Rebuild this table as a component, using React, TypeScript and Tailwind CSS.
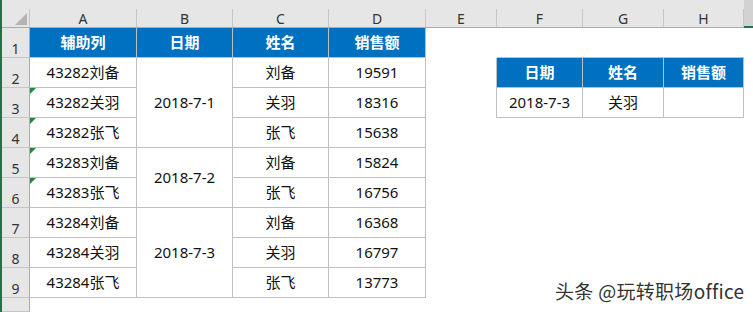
import React from 'react';
import clsx from 'clsx';

type CellDef = {
  t?: string;
  blue?: boolean;
  r?: boolean;
  b?: boolean;
  tri?: boolean;
  span?: 2 | 3;
};

const E: CellDef = {};

const rows: CellDef[][] = [
  // row 1
  [
    { t: '辅助列', blue: true, r: true, b: true },
    { t: '日期', blue: true, r: true, b: true },
    { t: '姓名', blue: true, r: true, b: true },
    { t: '销售额', blue: true, r: true, b: true },
    E,
    { b: true },
    { b: true },
    { b: true },
    E,
  ],
  // row 2
  [
    { t: '43282刘备', r: true, b: true },
    { t: '2018-7-1', r: true, b: true, span: 3 },
    { t: '刘备', r: true, b: true },
    { t: '19591', r: true, b: true },
    { r: true },
    { t: '日期', blue: true, r: true, b: true },
    { t: '姓名', blue: true, r: true, b: true },
    { t: '销售额', blue: true, r: true, b: true },
    E,
  ],
  // row 3
  [
    { t: '43282关羽', r: true, b: true, tri: true },
    { t: '关羽', r: true, b: true },
    { t: '18316', r: true, b: true },
    { r: true },
    { t: '2018-7-3', r: true, b: true },
    { t: '关羽', r: true, b: true },
    { r: true, b: true },
    E,
  ],
  // row 4
  [
    { t: '43282张飞', r: true, b: true, tri: true },
    { t: '张飞', r: true, b: true },
    { t: '15638', r: true, b: true },
    E, E, E, E, E,
  ],
  // row 5
  [
    { t: '43283刘备', r: true, b: true, tri: true },
    { t: '2018-7-2', r: true, b: true, span: 2 },
    { t: '刘备', r: true, b: true },
    { t: '15824', r: true, b: true },
    E, E, E, E, E,
  ],
  // row 6
  [
    { t: '43283张飞', r: true, b: true, tri: true },
    { t: '张飞', r: true, b: true },
    { t: '16756', r: true, b: true },
    E, E, E, E, E,
  ],
  // row 7
  [
    { t: '43284刘备', r: true, b: true },
    { t: '2018-7-3', r: true, b: true, span: 3 },
    { t: '刘备', r: true, b: true },
    { t: '16368', r: true, b: true },
    E, E, E, E, E,
  ],
  // row 8
  [
    { t: '43284关羽', r: true, b: true },
    { t: '关羽', r: true, b: true },
    { t: '16797', r: true, b: true },
    E, E, E, E, E,
  ],
  // row 9
  [
    { t: '43284张飞', r: true, b: true },
    { t: '张飞', r: true, b: true },
    { t: '13773', r: true, b: true },
    E, E, E, E, E,
  ],
  // row 10
  [E, E, E, E, E, E, E, E, E],
];

const cols = ['A', 'B', 'C', 'D', 'E', 'F', 'G', 'H', ''];

function Cell({ c }: { c: CellDef }) {
  return (
    <div
      className={clsx(
        'relative flex items-center justify-center text-[15px] leading-none border-[#bfbfbf]',
        c.blue ? 'bg-[#0070c0] text-white font-bold' : 'bg-white text-[#111]',
        c.r && 'border-r',
        c.b && 'border-b',
        c.span === 3 && 'row-span-3',
        c.span === 2 && 'row-span-2'
      )}
    >
      {c.tri && (
        <span className="absolute left-0 top-0 h-0 w-0 border-t-[6px] border-r-[6px] border-t-[#1e8a3a] border-r-transparent" />
      )}
      {c.t}
    </div>
  );
}

export default function App() {
  return (
    <div
      className="relative h-[312px] w-[753px] overflow-hidden border-l-2 border-[#217346] bg-white"
      style={{ fontFamily: '"Noto Sans", "Noto Sans CJK SC", sans-serif' }}
    >
      <div className="grid h-full grid-cols-[28px_107px_96px_96px_97px_71px_86px_81px_80px_1fr] grid-rows-[28px_repeat(9,30px)_1fr]">
        {/* corner */}
        <div className="flex flex-col border-b border-[#ababab] bg-[#e6e6e6]">
          <div className="h-[9px]" />
          <div className="flex flex-1 items-end justify-end border-r border-[#c6c6c6] pb-[2px] pr-[2px]">
            <svg width="12" height="12" viewBox="0 0 12 12">
              <polygon points="12,0 12,12 0,12" fill="#b4b4b4" />
            </svg>
          </div>
        </div>
        {/* column headers */}
        {cols.map((l, i) => (
          <div
            key={i}
            className={clsx(
              'flex flex-col',
              i === 8
                ? 'border-b-2 border-[#217346] bg-[#d2d2d2]'
                : 'border-b border-[#ababab] bg-[#e6e6e6]'
            )}
          >
            <div className="h-[9px]" />
            <div
              className={clsx(
                'flex flex-1 items-end justify-center pb-[1px] text-[14px] leading-none text-[#333]',
                i < 8 && 'border-r border-[#c6c6c6]'
              )}
            >
              {l}
            </div>
          </div>
        ))}
        {rows.map((row, ri) => (
          <React.Fragment key={ri}>
            <div className="flex items-end justify-center border-b border-r border-[#c6c6c6] border-r-[#ababab] bg-[#e6e6e6] pb-[1px] text-[14px] leading-none text-[#333]">
              {ri < 9 ? ri + 1 : ''}
            </div>
            {row.map((c, ci) => (
              <Cell key={ci} c={c} />
            ))}
          </React.Fragment>
        ))}
      </div>
      <div
        className="absolute left-[553px] top-[281px] whitespace-nowrap text-[19px] leading-none tracking-[0.3px] text-[#333] [text-shadow:1px_1px_1px_#fff,-1px_-1px_1px_#fff]"
        style={{ fontFamily: '"Noto Sans CJK SC", "Noto Sans", sans-serif' }}
      >
        头条 @玩转职场office
      </div>
    </div>
  );
}
